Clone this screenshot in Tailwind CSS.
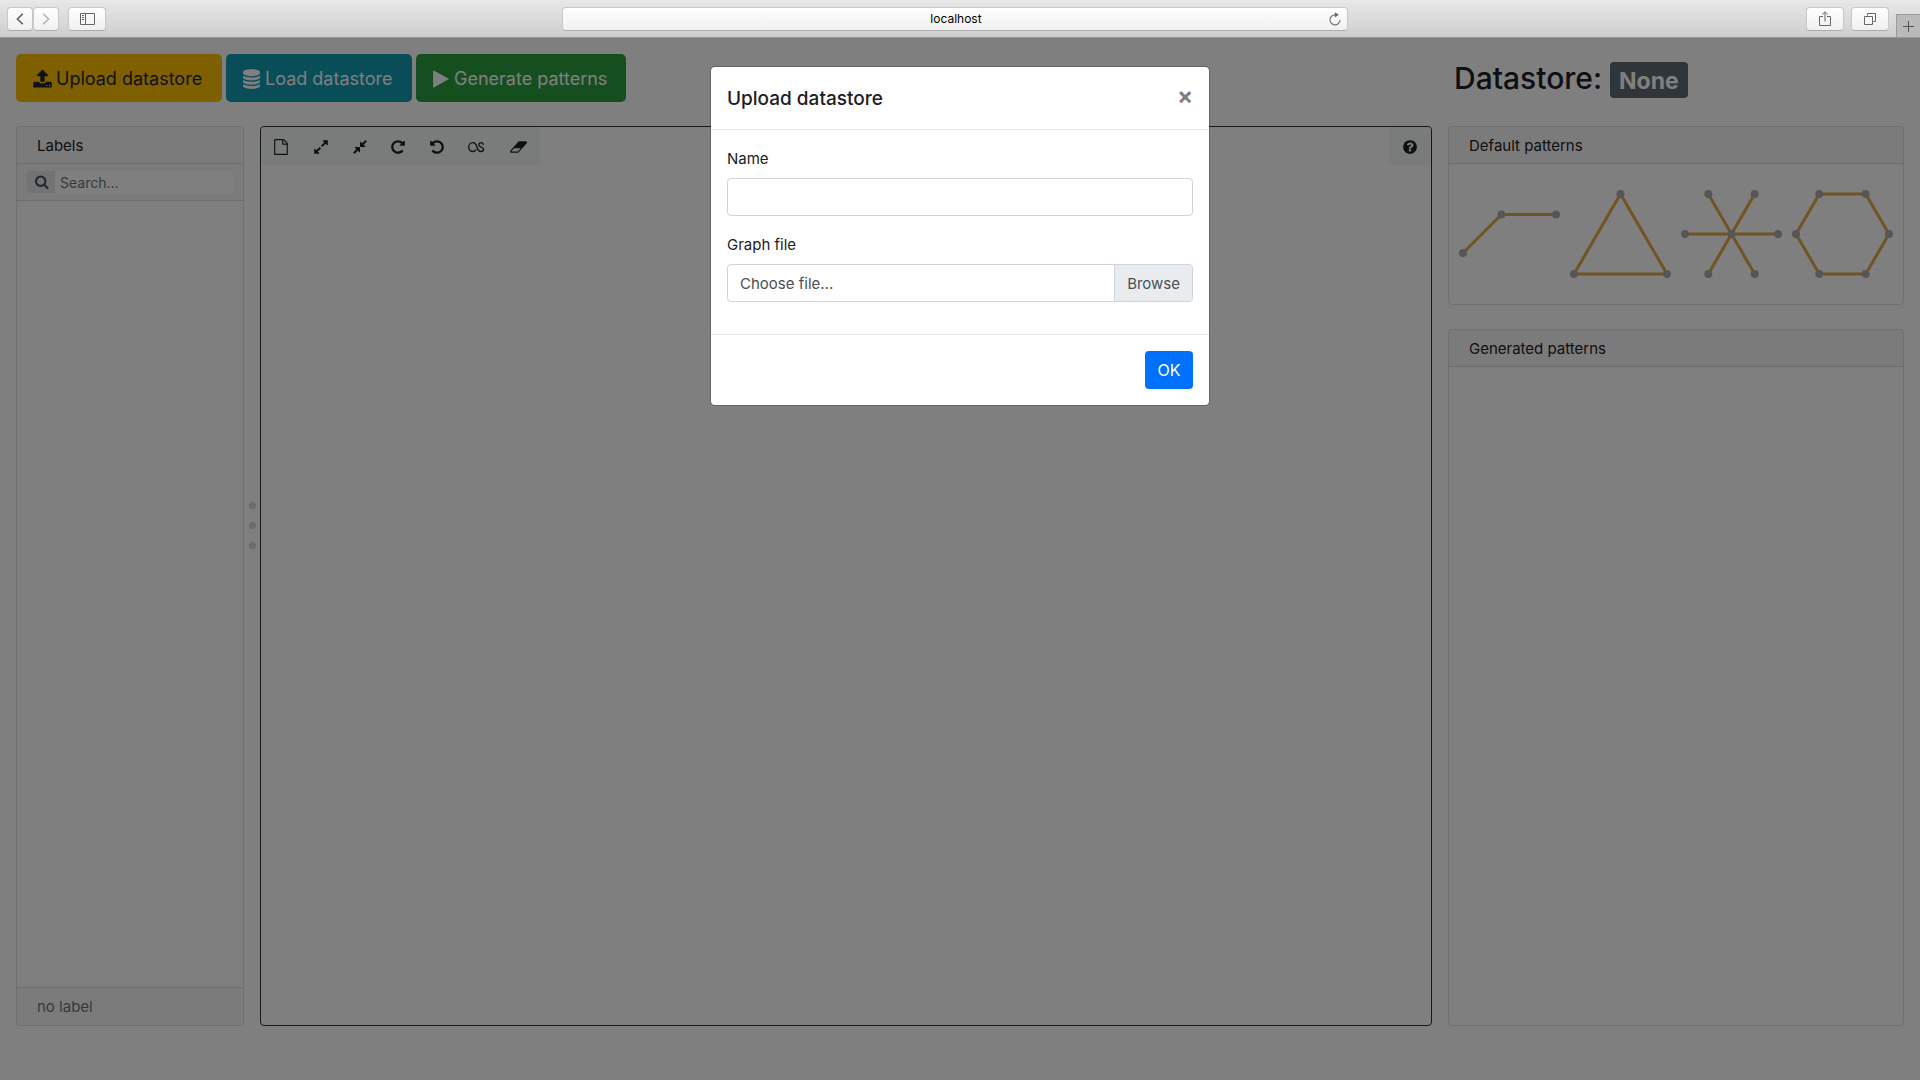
<!DOCTYPE html>
<html lang="en">
<head>
<meta charset="utf-8">
<meta name="viewport" content="width=device-width, initial-scale=1">
<title>localhost</title>
<script src="https://cdn.jsdelivr.net/npm/@tailwindcss/browser@4"></script>
</head>
<body class="flex min-h-screen flex-col bg-white font-['Inter',sans-serif] text-[15px] leading-6 text-[#1c2025]">

<!-- Icon symbols -->
<svg class="hidden" aria-hidden="true">
  <symbol id="i-upload" viewBox="64 0 1664 1792"><path d="M1344 1472q0-26-19-45t-45-19-45 19-19 45 19 45 45 19 45-19 19-45zm256 0q0-26-19-45t-45-19-45 19-19 45 19 45 45 19 45-19 19-45zm128-224v320q0 40-28 68t-68 28h-1472q-40 0-68-28t-28-68v-320q0-40 28-68t68-28h427q21 56 70.5 92t110.5 36h256q61 0 110.5-36t70.5-92h427q40 0 68 28t28 68zm-325-648q-17 40-59 40h-256v448q0 26-19 45t-45 19h-256q-26 0-45-19t-19-45v-448h-256q-42 0-59-40-17-39 14-69l448-448q18-19 45-19t45 19l448 448q31 30 14 69z"/></symbol>
  <symbol id="i-database" viewBox="128 0 1536 1792"><path d="M896 768q237 0 443-43t325-127v170q0 69-103 128t-280 93.5-385 34.5-385-34.5-280-93.5-103-128v-170q119 84 325 127t443 43zm0 768q237 0 443-43t325-127v170q0 69-103 128t-280 93.5-385 34.5-385-34.5-280-93.5-103-128v-170q119 84 325 127t443 43zm0-384q237 0 443-43t325-127v170q0 69-103 128t-280 93.5-385 34.5-385-34.5-280-93.5-103-128v-170q119 84 325 127t443 43zm0-1152q208 0 385 34.5t280 93.5 103 128v128q0 69-103 128t-280 93.5-385 34.5-385-34.5-280-93.5-103-128v-128q0-69 103-128t280-93.5 385-34.5z"/></symbol>
  <symbol id="i-play" viewBox="192 0 1408 1792"><path d="M1576 927l-1328 738q-23 13-39.5 3t-16.5-36v-1472q0-26 16.5-36t39.5 3l1328 738q23 13 23 31t-23 31z"/></symbol>
  <symbol id="i-search" viewBox="64 64 1728 1728"><path d="M1216 832q0-185-131.5-316.5t-316.5-131.5-316.5 131.5-131.5 316.5 131.5 316.5 316.5 131.5 316.5-131.5 131.5-316.5zm512 832q0 52-38 90t-90 38q-54 0-90-38l-343-342q-179 124-399 124-143 0-273.5-55.5t-225-150-150-225-55.5-273.5 55.5-273.5 150-225 225-150 273.5-55.5 273.5 55.5 225 150 150 225 55.5 273.5q0 220-124 399l343 343q37 37 37 90z"/></symbol>
  <symbol id="i-file" viewBox="0 0 1792 1792"><path d="M1596 380q28 28 48 76t20 88v1152q0 40-28 68t-68 28h-1344q-40 0-68-28t-28-68v-1600q0-40 28-68t68-28h896q40 0 88 20t76 48zm-444-244v376h376q-10-29-22-41l-313-313q-12-12-41-22zm384 1528v-1024h-416q-40 0-68-28t-28-68v-416h-768v1536h1280z"/></symbol>
  <symbol id="i-expand" viewBox="0 0 1792 1792"><path d="M883 1056q0 13-10 23l-332 332 144 144q19 19 19 45t-19 45-45 19h-448q-26 0-45-19t-19-45v-448q0-26 19-45t45-19 45 19l144 144 332-332q10-10 23-10t23 10l114 114q10 10 10 23zm781-864v448q0 26-19 45t-45 19-45-19l-144-144-332 332q-10 10-23 10t-23-10l-114-114q-10-10-10-23t10-23l332-332-144-144q-19-19-19-45t19-45 45-19h448q26 0 45 19t19 45z"/></symbol>
  <symbol id="i-compress" viewBox="0 0 1792 1792"><path d="M896 960v448q0 26-19 45t-45 19-45-19l-144-144-332 332q-10 10-23 10t-23-10l-114-114q-10-10-10-23t10-23l332-332-144-144q-19-19-19-45t19-45 45-19h448q26 0 45 19t19 45zm755-672q0 13-10 23l-332 332 144 144q19 19 19 45t-19 45-45 19h-448q-26 0-45-19t-19-45v-448q0-26 19-45t45-19 45 19l144 144 332-332q10-10 23-10t23 10l114 114q10 10 10 23z"/></symbol>
  <symbol id="i-repeat" viewBox="0 0 1792 1792"><path d="M1664 256v448q0 26-19 45t-45 19h-448q-42 0-59-40-17-39 14-69l138-138q-148-137-349-137-104 0-198.5 40.5t-163.5 109.5-109.5 163.5-40.5 198.5 40.5 198.5 109.5 163.5 163.5 109.5 198.5 40.5q119 0 225-52t179-147q7-10 23-12 15 0 25 9l137 138q9 8 9.5 20.5t-7.5 22.5q-109 132-264 204.5t-327 72.5q-156 0-298-61t-245-164-164-245-61-298 61-298 164-245 245-164 298-61q147 0 284.5 55.5t244.5 156.5l130-129q29-31 70-14 39 17 39 59z"/></symbol>
  <symbol id="i-undo" viewBox="0 0 1792 1792"><use href="#i-repeat" width="1792" height="1792" transform="matrix(-1 0 0 1 1792 0)"/></symbol>
  <symbol id="i-lasso" viewBox="0 0 18 12"><path fill="none" stroke="currentColor" stroke-width="1.4" stroke-linecap="round" d="M8.4 9.2C7.6 10.2 6.5 10.8 5.1 10.8A4.4 4.7 0 1 1 5.1 1.4C8.3 1.4 8.8 3.6 9.6 6.3C10.4 9 11 10.8 13.5 10.8C15.4 10.8 16.5 9.8 16.5 8.4C16.5 5.6 11.5 6.6 11.5 3.8C11.5 2.4 12.5 1.4 13.8 1.4C15 1.4 15.9 2 16.2 3.1"/></symbol>
  <symbol id="i-eraser" viewBox="-64 0 1920 1792"><path d="M832 1408l336-384h-768l-336 384h768zm1013-1077q15 34 9.5 71.5t-30.5 65.5l-896 1024q-38 44-96 44h-768q-38 0-69.5-20.5t-47.5-54.5q-15-34-9.5-71.5t30.5-65.5l896-1024q38-44 96-44h768q38 0 69.5 20.5t47.5 54.5z"/></symbol>
  <symbol id="i-help" viewBox="0 0 1792 1792"><path d="M1024 1376v-192q0-14-9-23t-23-9h-192q-14 0-23 9t-9 23v192q0 14 9 23t23 9h192q14 0 23-9t9-23zm256-672q0-88-55.5-163t-138.5-116-170-41q-243 0-371 213-15 24 8 42l132 100q7 6 19 6 16 0 25-12 53-68 86-92 34-24 86-24 48 0 85.5 26t37.5 59q0 38-20 61t-68 45q-63 28-115.5 86.5t-52.5 125.5v36q0 14 9 23t23 9h192q14 0 23-9t9-23q0-19 21.5-49.5t54.5-49.5q32-18 49-28.5t46-35 44.5-48 28-60.5 12.5-81zm384 192q0 209-103 385.5t-279.5 279.5-385.5 103-385.5-103-279.5-279.5-103-385.5 103-385.5 279.5-279.5 385.5-103 385.5 103 279.5 279.5 103 385.5z"/></symbol>
</svg>

<!-- Browser bar -->
<header class="grid h-[38px] shrink-0 grid-cols-[562fr_786fr_572fr] items-center border-b border-[#989898] bg-linear-to-b from-[#e8e8e8] to-[#cecece]">
  <div class="flex items-center pl-[7px]">
    <button type="button" aria-label="Back" class="flex h-6 w-[26px] items-center justify-center rounded border border-[#c8c8c8] border-b-[#adadad] bg-linear-to-b from-white to-[#f0f0f0]">
      <svg class="h-3 w-2" viewBox="0 0 8 12" fill="none" stroke="#666" stroke-width="1.6"><path d="M6.8.8 1.4 6l5.4 5.2"/></svg>
    </button>
    <button type="button" aria-label="Forward" class="flex h-6 w-[26px] items-center justify-center rounded border border-[#c8c8c8] border-b-[#adadad] bg-linear-to-b from-white to-[#f0f0f0]">
      <svg class="h-3 w-2" viewBox="0 0 8 12" fill="none" stroke="#b8b8b8" stroke-width="1.6"><path d="M1.2.8 6.6 6l-5.4 5.2"/></svg>
    </button>
    <button type="button" aria-label="Show sidebar" class="ml-[9px] flex h-6 w-[38px] items-center justify-center rounded border border-[#c8c8c8] border-b-[#adadad] bg-linear-to-b from-white to-[#f0f0f0]">
      <svg class="h-3 w-[15px]" viewBox="0 0 15 12" fill="none" stroke="#666"><path d="M.5.5h14v11H.5zM5.500.5v11"/><path d="M2 2.500h2M2 4.500h2M2 6.500h2"/></svg>
    </button>
  </div>
  <div class="flex h-6 items-center rounded border border-[#c8c8c8] border-b-[#adadad] bg-linear-to-b from-white to-[#f0f0f0] px-[5px]">
    <input type="text" aria-label="Address" value="localhost" class="min-w-0 flex-1 bg-transparent pt-px pl-4 text-center text-xs text-black outline-none">
    <button type="button" aria-label="Reload">
      <svg class="h-[14px] w-[14px]" viewBox="0 0 14 14"><path d="M8.500 2.800H7A5 5 0 1 0 12 8" fill="none" stroke="#777" stroke-width="1.2"/><path d="M6.800.2v5.200L10.800 2.800z" fill="#666"/></svg>
    </button>
  </div>
  <div class="flex items-center justify-end self-stretch">
    <button type="button" aria-label="Share" class="mr-[7px] flex h-6 w-[38px] items-center justify-center rounded border border-[#c8c8c8] border-b-[#adadad] bg-linear-to-b from-white to-[#f0f0f0]">
      <svg class="h-4 w-3" viewBox="0 0 12 16" fill="none" stroke="#666"><path d="M4 5.500H.5v9h11v-9H8M6 10.500V1M3.200 3.500 6 .8l2.800 2.700"/></svg>
    </button>
    <button type="button" aria-label="Show all tabs" class="mr-[7px] flex h-6 w-[38px] items-center justify-center rounded border border-[#c8c8c8] border-b-[#adadad] bg-linear-to-b from-white to-[#f0f0f0]">
      <svg class="h-3 w-3" viewBox="0 0 12 12" fill="none" stroke="#666"><path d="M.5 3.500h8v8h-8zM3.500 2.500v-2h8v8h-2"/></svg>
    </button>
    <button type="button" aria-label="New tab" class="flex h-[23px] w-6 items-center justify-center self-end border-t border-l border-[#9c9c9c] bg-[#bababa]">
      <svg class="h-[11px] w-[11px]" viewBox="0 0 11 11" stroke="#555"><path d="M5.500 0v11M0 5.500h11"/></svg>
    </button>
  </div>
</header>

<div class="relative flex flex-1 flex-col">
  <!-- Application page -->
  <main class="flex flex-1 flex-col px-4 pt-4 pb-[54px]">
    <div class="mb-6 flex items-center">
      <div class="flex flex-1 gap-1">
        <button type="button" class="flex h-12 w-[206px] items-center gap-1 rounded-[5px] bg-[#ffc000] pt-px pl-[17px] text-lg whitespace-nowrap text-[#212529]">
          <svg class="h-5 w-[19px] fill-current"><use href="#i-upload"/></svg>Upload datastore
        </button>
        <button type="button" class="flex h-12 w-[186px] items-center gap-[5px] rounded-[5px] bg-[#129ab2] pt-px pl-[17px] text-lg whitespace-nowrap text-white">
          <svg class="h-5 w-[17px] fill-current"><use href="#i-database"/></svg>Load datastore
        </button>
        <button type="button" class="flex h-12 w-[210px] items-center gap-[5px] rounded-[5px] bg-[#2a9e3e] pt-px pl-[17px] text-lg whitespace-nowrap text-white">
          <svg class="h-5 w-4 fill-current"><use href="#i-play"/></svg>Generate patterns
        </button>
      </div>
      <h2 class="flex w-[calc(25%-16px)] items-center gap-2 pl-[6px] text-[30px] leading-9 font-medium">
        Datastore:
        <span class="mt-1 flex h-9 items-center rounded bg-[#5f6a72] px-[9px] pt-px text-[23px] font-bold text-white">None</span>
      </h2>
    </div>

    <div class="flex flex-1">
      <section class="flex w-57 flex-col rounded border border-black/12">
        <h3 class="h-[37px] border-b border-black/12 bg-black/3 px-5 pt-[7px]">Labels</h3>
        <div class="flex h-[37px] items-center border-b border-black/12 bg-black/3 px-[10px]">
          <label for="search" class="flex h-[22px] w-7 shrink-0 items-center justify-center rounded-l-[3px] bg-[#e4e7eb] pl-px text-[#495057]">
            <svg class="h-[14px] w-[14px] fill-current" role="img" aria-label="Search labels"><use href="#i-search"/></svg>
          </label>
          <input id="search" type="text" placeholder="Search..." class="h-[22px] min-w-0 flex-1 rounded-r-[3px] bg-white px-[5px] pt-px text-sm outline-none placeholder:text-[#6c757d]">
        </div>
        <div class="flex-1"></div>
        <p class="h-[38px] border-t border-black/12 bg-black/3 px-5 pt-[7px] text-[#6c757d]">no label</p>
      </section>

      <div class="flex w-4 flex-col items-center justify-center gap-[13px] pb-[101px]">
        <span class="h-[7px] w-[7px] rounded-full bg-[#d6d6d6]"></span>
        <span class="h-[7px] w-[7px] rounded-full bg-[#d6d6d6]"></span>
        <span class="h-[7px] w-[7px] rounded-full bg-[#d6d6d6]"></span>
      </div>

      <section class="flex flex-1 items-start justify-between rounded border border-[#2c2e33]" aria-label="Query editor">
        <div class="flex h-[38px] rounded bg-[#f4f9f8] pt-px">
          <button type="button" aria-label="New" class="flex w-[40px] items-center justify-center"><svg class="h-4 w-4 fill-current"><use href="#i-file"/></svg></button>
          <button type="button" aria-label="Expand" class="flex w-[39px] items-center justify-center"><svg class="h-4 w-4 fill-current"><use href="#i-expand"/></svg></button>
          <button type="button" aria-label="Compress" class="flex w-[39px] items-center justify-center"><svg class="h-4 w-4 fill-current"><use href="#i-compress"/></svg></button>
          <button type="button" aria-label="Redo" class="flex w-[38px] items-center justify-center"><svg class="h-4 w-4 fill-current"><use href="#i-repeat"/></svg></button>
          <button type="button" aria-label="Undo" class="flex w-[39px] items-center justify-center"><svg class="h-4 w-4 fill-current"><use href="#i-undo"/></svg></button>
          <button type="button" aria-label="Lasso" class="flex w-[41px] items-center justify-center"><svg class="h-3 w-[17px]"><use href="#i-lasso"/></svg></button>
          <button type="button" aria-label="Erase" class="flex w-[43px] items-center justify-center"><svg class="h-4 w-[17px] fill-current"><use href="#i-eraser"/></svg></button>
        </div>
        <button type="button" aria-label="Help" class="flex h-[38px] w-[42px] items-center justify-center rounded bg-[#f4f9f8] pt-px"><svg class="h-4 w-4 fill-current"><use href="#i-help"/></svg></button>
      </section>

      <div class="ml-4 flex w-[calc(25%-16px)] flex-col gap-6">
        <section class="rounded border border-black/12">
          <h3 class="h-[37px] border-b border-black/12 bg-black/3 px-5 pt-[7px]">Default patterns</h3>
          <div class="grid grid-cols-4 px-[5px]">
            <svg class="h-[140px] w-full" viewBox="0 0 111 140" role="img" aria-label="Path">
              <path d="M9 89 47.500 50.500H102" fill="none" stroke="#e2a748" stroke-width="3"/>
              <g fill="#acacac"><circle cx="9" cy="89" r="4"/><circle cx="47.500" cy="50.500" r="4"/><circle cx="102" cy="50.500" r="4"/></g>
            </svg>
            <svg class="h-[140px] w-full" viewBox="0 0 111 140" role="img" aria-label="Triangle">
              <path d="M55.500 30 102 110H9z" fill="none" stroke="#e2a748" stroke-width="3"/>
              <g fill="#acacac"><circle cx="55.500" cy="30" r="4"/><circle cx="102" cy="110" r="4"/><circle cx="9" cy="110" r="4"/></g>
            </svg>
            <svg class="h-[140px] w-full" viewBox="0 0 111 140" role="img" aria-label="Star">
              <path d="M32.300 30 78.700 110M78.700 30 32.300 110M9 70H102" fill="none" stroke="#e2a748" stroke-width="3"/>
              <g fill="#acacac"><circle cx="32.300" cy="30" r="4"/><circle cx="78.700" cy="30" r="4"/><circle cx="9" cy="70" r="4"/><circle cx="55.500" cy="70" r="4"/><circle cx="102" cy="70" r="4"/><circle cx="32.300" cy="110" r="4"/><circle cx="78.700" cy="110" r="4"/></g>
            </svg>
            <svg class="h-[140px] w-full" viewBox="0 0 111 140" role="img" aria-label="Hexagon">
              <path d="M32.300 30H78.700L102 70 78.700 110H32.300L9 70z" fill="none" stroke="#e2a748" stroke-width="3"/>
              <g fill="#acacac"><circle cx="32.300" cy="30" r="4"/><circle cx="78.700" cy="30" r="4"/><circle cx="102" cy="70" r="4"/><circle cx="78.700" cy="110" r="4"/><circle cx="32.300" cy="110" r="4"/><circle cx="9" cy="70" r="4"/></g>
            </svg>
          </div>
        </section>
        <section class="flex-1 rounded border border-black/12">
          <h3 class="h-[37px] border-b border-black/12 bg-black/3 px-5 pt-[7px]">Generated patterns</h3>
        </section>
      </div>
    </div>
  </main>

  <!-- Upload dialog over the dimmed page -->
  <div class="absolute inset-0 bg-black/50 pt-7">
    <form role="dialog" aria-labelledby="dialog-title" class="mx-auto max-w-[500px] rounded-[5px] border border-black/20 bg-white bg-clip-padding">
      <div class="flex h-[63px] items-center justify-between border-b border-[#e9ecef] px-4">
        <h1 id="dialog-title" class="pt-px text-[19px] font-medium">Upload datastore</h1>
        <button type="button" aria-label="Close" class="w-4 pb-1 text-2xl leading-6 font-bold text-black/50">×</button>
      </div>
      <div class="flex flex-col p-4">
        <label for="name" class="mb-[7px] pt-px">Name</label>
        <input id="name" type="text" class="mb-4 h-[38px] rounded border border-[#ced4da] px-3 outline-none">
        <label for="graph" class="mb-[7px] pt-px">Graph file</label>
        <input id="graph" type="file" class="sr-only">
        <label for="graph" class="mb-4 flex h-[38px] overflow-hidden rounded border border-[#ced4da] leading-9 text-[#495057]">
          <span class="flex-1 px-3 pt-px">Choose file...</span>
          <span class="border-l border-[#ced4da] bg-[#e9ecef] px-3 pt-px">Browse</span>
        </label>
      </div>
      <div class="flex justify-end border-t border-[#e9ecef] p-4">
        <button type="submit" class="h-[38px] w-12 rounded bg-[#0070ff] text-base text-white">OK</button>
      </div>
    </form>
  </div>
</div>
</body>
</html>
